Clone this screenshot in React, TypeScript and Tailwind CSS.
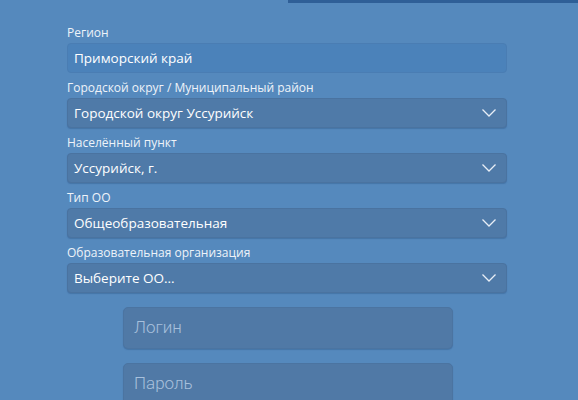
import React from 'react';

const Chevron: React.FC = () => (
  <svg width="16" height="10" viewBox="0 0 16 10" fill="none" className="shrink-0">
    <path d="M1.5 1.5 L8 8 L14.5 1.5" stroke="#e8eef6" strokeWidth="1.3" />
  </svg>
);

const SelectField: React.FC<{ label: string; value: string }> = ({ label, value }) => (
  <div className="flex flex-col">
    <label className="text-[12px] leading-[15px] text-[#eef3f9] h-[15px] mb-[3px] whitespace-nowrap">{label}</label>
    <div className="h-[30px] rounded-[4px] bg-[#4f7aa8] border border-[#4a73a0] shadow-[0_1px_1px_rgba(40,80,130,0.35)] flex items-center justify-between pl-[6px] pr-[9px]">
      <span className="text-[13.5px] text-white">{value}</span>
      <Chevron />
    </div>
  </div>
);

export default function App() {
  return (
    <div className="w-[578px] h-[400px] bg-[#5589bd] overflow-hidden relative" style={{ fontFamily: '"Open Sans", "Noto Sans", sans-serif' }}>
      <div className="flex justify-end">
        <div className="w-[290px] h-[3px] bg-[#2f5f97]" />
      </div>

      <div className="ml-[67px] w-[440px] mt-[22px] flex flex-col gap-[7px]">
        <div className="flex flex-col">
          <label className="text-[12px] leading-[15px] text-[#eef3f9] h-[15px] mb-[3px]">Регион</label>
          <div className="h-[30px] rounded-[4px] bg-[#4b82ba] border border-[#4a7db3] flex items-center pl-[6px]">
            <span className="text-[13.5px] text-white">Приморский край</span>
          </div>
        </div>
        <SelectField label="Городской округ / Муниципальный район" value="Городской округ Уссурийск" />
        <SelectField label="Населённый пункт" value="Уссурийск, г." />
        <SelectField label="Тип ОО" value="Общеобразовательная" />
        <SelectField label="Образовательная организация" value="Выберите ОО..." />
      </div>

      <div className="ml-[123px] w-[330px] mt-[14px] flex flex-col gap-[14px]">
        <div className="h-[42px] rounded-[5px] bg-[#5079a6] border border-[#4b74a1] shadow-[0_1px_1px_rgba(40,80,130,0.35)] flex items-center pl-[10px]">
          <span className="text-[17px] font-light text-[#a8c0dc]" style={{ fontFamily: 'Roboto, sans-serif' }}>Логин</span>
        </div>
        <div className="h-[42px] rounded-[5px] bg-[#5079a6] border border-[#4b74a1] shadow-[0_1px_1px_rgba(40,80,130,0.35)] flex items-center pl-[10px]">
          <span className="text-[17px] font-light text-[#a8c0dc]" style={{ fontFamily: 'Roboto, sans-serif' }}>Пароль</span>
        </div>
      </div>
    </div>
  );
}
